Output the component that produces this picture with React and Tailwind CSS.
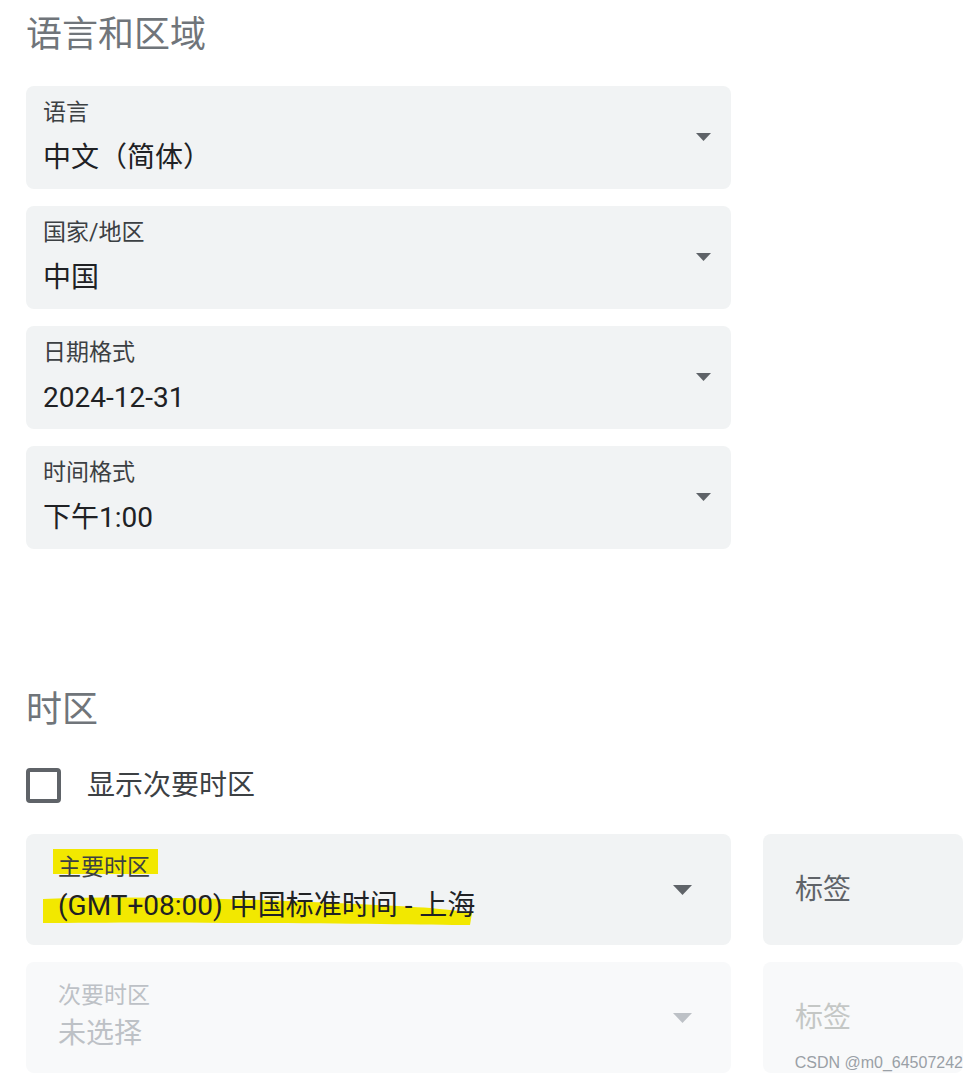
import { useState } from "react";

const FONT = { fontFamily: 'Roboto, "Noto Sans CJK SC", sans-serif' };

function Arrow({ big = false, muted = false }) {
  const w = big ? 19 : 15;
  const h = big ? 10 : 8;
  return (
    <svg width={w} height={h} viewBox={`0 0 ${w} ${h}`} className="shrink-0">
      <path d={`M0 0 L${w} 0 L${w / 2} ${h} Z`} fill={muted ? "#bdc1c6" : "#5f6368"} />
    </svg>
  );
}

function SelectCard({ label, value }) {
  return (
    <div className="flex h-[103px] w-[705px] items-start justify-between rounded-[8px] bg-[#f1f3f4] pl-[17px] pr-[20px]">
      <div className="pt-[11px]">
        <div className="text-[23px] leading-[32px] text-[#3c4043]">{label}</div>
        <div className="mt-[10px] text-[28px] leading-[38px] text-[#202124]">{value}</div>
      </div>
      <div className="flex h-full items-center pb-[1px]">
        <Arrow />
      </div>
    </div>
  );
}

function Section({ title, children, className = "" }) {
  return (
    <section className={className}>
      <h2 className="text-[36px] leading-[48px] text-[#70757a]">{title}</h2>
      {children}
    </section>
  );
}

export default function App() {
  const [showSecondary, setShowSecondary] = useState(false);

  const formats = [
    { label: "语言", value: "中文（简体）" },
    { label: "国家/地区", value: "中国" },
    { label: "日期格式", value: "2024-12-31" },
    { label: "时间格式", value: "下午1:00" },
  ];

  return (
    <div className="relative min-h-[1082px] w-[978px] bg-white pl-[26px] pr-[15px] pt-[11px]" style={FONT}>
      <Section title="语言和区域">
        <div className="mt-[27px] flex flex-col gap-[17px]">
          {formats.map((f) => (
            <SelectCard key={f.label} label={f.label} value={f.value} />
          ))}
        </div>
      </Section>

      <Section title="时区" className="mt-[137px]">
        <label className="mt-[34px] flex cursor-pointer items-center gap-[26px]">
          <input
            type="checkbox"
            checked={showSecondary}
            onChange={(e) => setShowSecondary(e.target.checked)}
            className="sr-only"
          />
          <span className="h-[35px] w-[35px] rounded-[4px] border-[4px] border-[#5f6368]" />
          <span className="text-[28px] leading-[35px] text-[#3c4043]">显示次要时区</span>
        </label>

        <div className="mt-[31px] flex gap-[32px]">
          <div className="relative flex h-[111px] w-[705px] shrink-0 items-center justify-between rounded-[8px] bg-[#f1f3f4] pl-[32px] pr-[39px]">
            {/* marker highlight */}
            <svg className="absolute left-0 top-0" width="705" height="111">
              <rect x="27" y="15" width="105" height="25" fill="#f2e800" />
              <path
                d="M17 65 C120 61 250 66 350 71 C400 73 430 76 446 79 L444 91 C400 91 300 89 200 89 C120 88 60 89 17 89 Z"
                fill="#f2e800"
              />
            </svg>
            <div className="relative pb-[2px]">
              <div className="text-[23px] leading-[30px] text-[#3c4043]">主要时区</div>
              <div className="mt-[4px] text-[28px] leading-[38px] text-[#202124]">
                (GMT+08:00) 中国标准时间 - 上海
              </div>
            </div>
            <Arrow big />
          </div>
          <div className="flex h-[111px] w-[200px] shrink-0 items-center rounded-[8px] bg-[#f1f3f4] pl-[32px]">
            <span className="text-[28px] text-[#5f6368]">标签</span>
          </div>
        </div>

        <div className="mt-[17px] flex gap-[32px]">
          <div className="flex h-[111px] w-[705px] shrink-0 items-center justify-between rounded-[8px] bg-[#f8f9fa] pl-[32px] pr-[39px]">
            <div className="pb-[2px]">
              <div className="text-[23px] leading-[30px] text-[#bdc1c6]">次要时区</div>
              <div className="mt-[4px] text-[28px] leading-[38px] text-[#bdc1c6]">未选择</div>
            </div>
            <Arrow big muted />
          </div>
          <div className="flex h-[111px] w-[200px] shrink-0 items-center rounded-[8px] bg-[#f8f9fa] pl-[32px]">
            <span className="text-[28px] text-[#c4c7c5]">标签</span>
          </div>
        </div>
      </Section>

      <div
        className="absolute bottom-[10px] right-[15px] text-[16px] leading-[18px] text-[#9aa0a6]"
        style={{ fontFamily: '"Liberation Sans", Arial, sans-serif' }}
      >
        CSDN @m0_64507242
      </div>
    </div>
  );
}
